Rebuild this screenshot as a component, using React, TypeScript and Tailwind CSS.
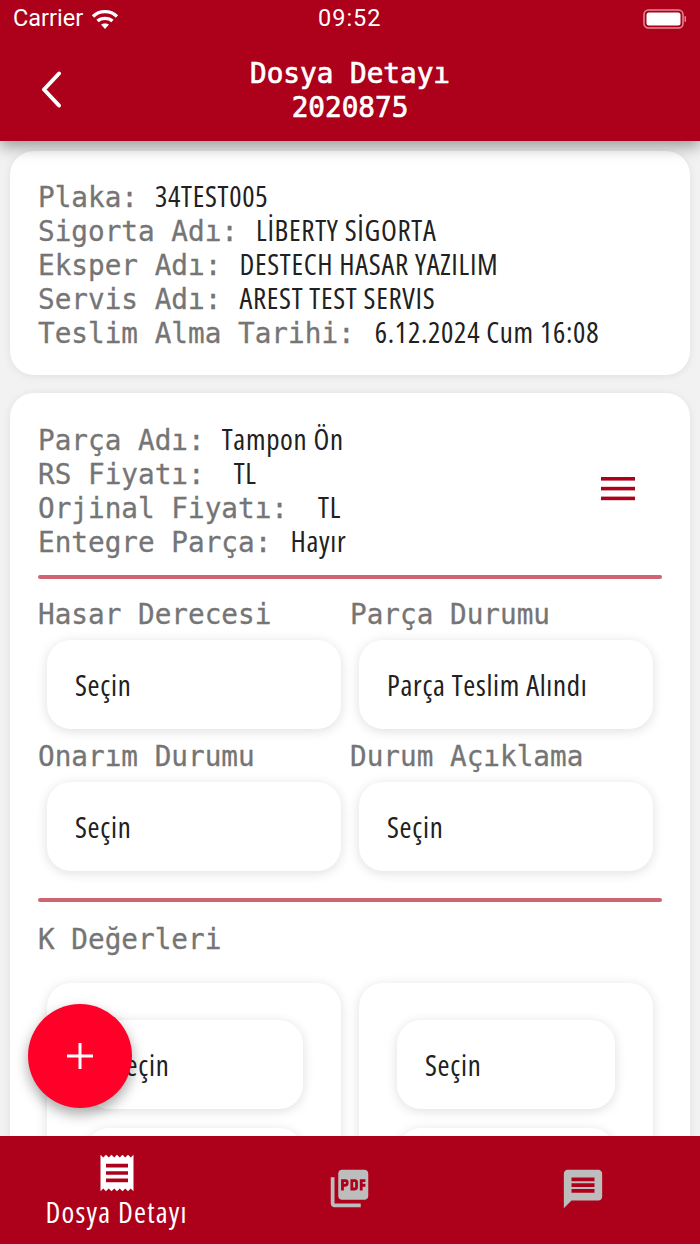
import { MdMessage, MdPictureAsPdf, MdReceipt } from 'react-icons/md'

const labelFont = "font-['DejaVu_Sans_Mono',monospace] text-[27.7px] leading-[34px] text-[#757575] [-webkit-text-stroke:0.3px_#757575]"
const valueFont = "font-['Open_Sans',sans-serif] [font-stretch:87.5%] text-[29px] leading-[34px] tracking-[0.7px] text-[#212121] [-webkit-text-stroke:0px]"

const InfoRow = ({ label, value, gap = 'ml-4' }: { label: string; value: string; gap?: string }) => (
  <div className={`${labelFont} flex h-[34px] items-baseline whitespace-nowrap`}>
    <span>{label}</span>
    <span className={`${valueFont} ${gap}`}>{value}</span>
  </div>
)

const SelectBox = ({ text = '', className = '' }: { text?: string; className?: string }) => (
  <div
    className={`h-[89px] rounded-3xl bg-white shadow-[0_2px_12px_rgba(0,0,0,0.13)] pl-7 flex items-center whitespace-nowrap ${valueFont} ${className}`}
  >
    {text}
  </div>
)

const Field = ({ label, value }: { label: string; value: string }) => (
  <div>
    <div className={`${labelFont} h-[34px]`}>{label}</div>
    <div className="px-[9px] mt-2">
      <SelectBox text={value} />
    </div>
  </div>
)

const Divider = () => <div className="h-1 rounded-full bg-[#cf6473]" />

const KCard = () => (
  <div className="rounded-3xl bg-white shadow-[0_2px_12px_rgba(0,0,0,0.13)] px-[38px] pt-[37px] pb-6 flex flex-col gap-[19px]">
    <SelectBox text="Seçin" />
    <SelectBox />
  </div>
)

export default function App() {
  return (
    <div className="relative h-[1244px] w-[700px] overflow-hidden bg-[#f2f2f2] flex flex-col">
      <header className="relative z-10 h-[141px] shrink-0 bg-[#ad001a] text-white shadow-[0_6px_14px_rgba(0,0,0,0.35)]">
        <div className="flex h-[38px] items-center justify-between pl-[13px] pr-[13px] font-['Roboto',sans-serif] text-[23.5px]">
          <div className="flex items-center gap-[8px]">
            <span>Carrier</span>
            <svg width="28" height="21" viewBox="0 0 27 21" fill="none" stroke="white" strokeWidth="3.4">
              <path d="M1.5 7.5 C8 1 19 1 25.5 7.5" />
              <path d="M6 12 C10 8.5 17 8.5 21 12" />
              <path d="M13.5 20 L9.5 15.5 C11.5 14 15.5 14 17.5 15.5 Z" fill="white" stroke="none" />
            </svg>
          </div>
          <span className="absolute left-[318px] tracking-[1px]">09:52</span>
          <svg width="44" height="22" viewBox="0 0 44 22">
            <rect x="1" y="2" width="39" height="18" rx="4.5" fill="none" stroke="#e08a97" strokeWidth="1.5" />
            <rect x="3.5" y="4.5" width="34" height="13" rx="2.5" fill="white" />
            <rect x="41.5" y="8" width="1.5" height="6" rx="0.7" fill="#e08a97" />
          </svg>
        </div>
        <div className="relative text-center font-['DejaVu_Sans_Mono',monospace] text-[27.7px] leading-[34px] pt-[19px] [-webkit-text-stroke:0.7px_white]">
          <svg className="absolute left-[41px] top-[33px]" width="22" height="37" viewBox="0 0 22 37" fill="none" stroke="white" strokeWidth="4" strokeLinecap="round" strokeLinejoin="round">
            <path d="M18 2.5 L3 18.5 L18 34.5" />
          </svg>
          <div>Dosya Detayı</div>
          <div>2020875</div>
        </div>
      </header>

      <main className="flex-1 overflow-hidden px-[10px] pt-[10px] flex flex-col gap-[18px]">
        <section className="h-[224px] shrink-0 rounded-3xl bg-white shadow-[0_1px_8px_rgba(0,0,0,0.08)] px-7 pt-[28px]">
          <InfoRow label="Plaka:" value="34TEST005" gap="ml-[17px]" />
          <InfoRow label="Sigorta Adı:" value="LİBERTY SİGORTA" gap="ml-[18px]" />
          <InfoRow label="Eksper Adı:" value="DESTECH HASAR YAZILIM" gap="ml-[18px]" />
          <InfoRow label="Servis Adı:" value="AREST TEST SERVIS" gap="ml-[18px]" />
          <InfoRow label="Teslim Alma Tarihi:" value="6.12.2024 Cum 16:08" gap="ml-5" />
        </section>

        <section className="shrink-0 rounded-3xl bg-white shadow-[0_1px_8px_rgba(0,0,0,0.08)] px-7 pt-[29px]">
          <div className="flex items-center justify-between">
            <div>
              <InfoRow label="Parça Adı:" value="Tampon Ön" gap="ml-[17px]" />
              <InfoRow label="RS Fiyatı:" value="TL" gap="ml-[29px]" />
              <InfoRow label="Orjinal Fiyatı:" value="TL" gap="ml-[30px]" />
              <InfoRow label="Entegre Parça:" value="Hayır" gap="ml-[19px]" />
            </div>
            <svg className="mr-[27px] mb-[2px]" width="34" height="24" viewBox="0 0 34 24" fill="#ad001a">
              <rect y="0" width="34" height="3.6" />
              <rect y="9.8" width="34" height="3.6" />
              <rect y="19.6" width="34" height="3.6" />
            </svg>
          </div>
          <div className="mt-[17px]">
            <Divider />
          </div>
          <div className="mt-[19px] grid grid-cols-2 gap-y-[11px]">
            <Field label="Hasar Derecesi" value="Seçin" />
            <Field label="Parça Durumu" value="Parça Teslim Alındı" />
            <Field label="Onarım Durumu" value="Seçin" />
            <Field label="Durum Açıklama" value="Seçin" />
          </div>
          <div className="mt-[27px]">
            <Divider />
          </div>
          <div className={`${labelFont} mt-[21px]`}>K Değerleri</div>
          <div className="mt-[26px] grid grid-cols-2">
            <div className="px-[9px]">
              <KCard />
            </div>
            <div className="px-[9px]">
              <KCard />
            </div>
          </div>
        </section>
      </main>

      <button className="absolute left-[28px] top-[1004px] z-10 flex h-[104px] w-[104px] items-center justify-center rounded-full bg-[#ff0029] shadow-[0_6px_14px_rgba(0,0,0,0.35)]">
        <svg width="26" height="26" viewBox="0 0 26 26" fill="white">
          <rect x="11.5" y="0" width="3" height="26" />
          <rect x="0" y="11.5" width="26" height="3" />
        </svg>
      </button>

      <nav className="relative z-10 grid h-[108px] shrink-0 grid-cols-3 bg-[#ad001a]">
        <div className="flex flex-col items-center pt-[15px] text-white">
          <MdReceipt size={44} />
          <span className="font-['Open_Sans',sans-serif] [font-stretch:87.5%] text-[29px] leading-[34px] tracking-[1.2px]">Dosya Detayı</span>
        </div>
        <div className="flex justify-center pt-[30px] text-[#bdbdbd]">
          <MdPictureAsPdf size={45} />
        </div>
        <div className="flex justify-center pt-[30px] text-[#bdbdbd]">
          <MdMessage size={46} />
        </div>
      </nav>
    </div>
  )
}
